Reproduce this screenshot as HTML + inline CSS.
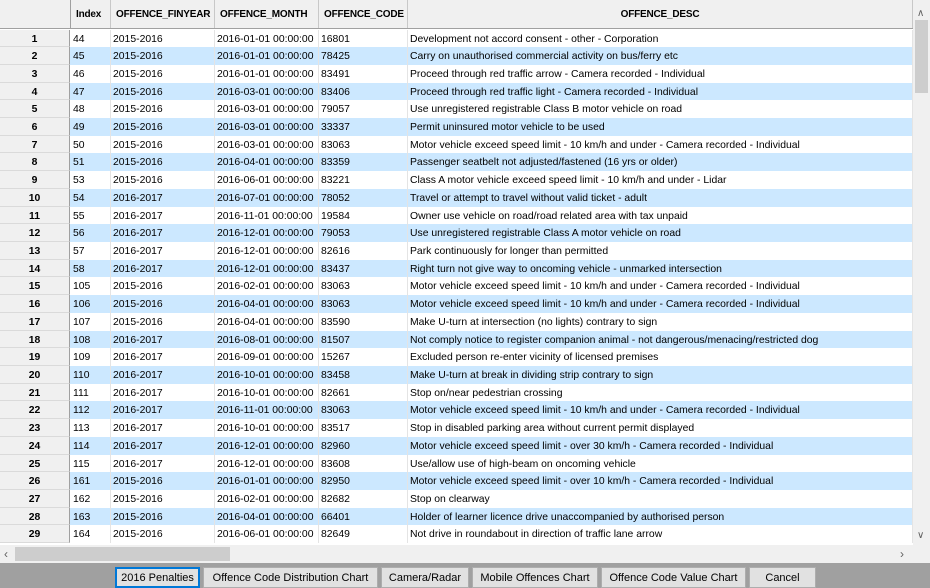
<!DOCTYPE html>
<html><head><meta charset="utf-8"><style>
*{margin:0;padding:0;box-sizing:border-box}
body{width:930px;height:588px;overflow:hidden;background:#fff;font-family:"Liberation Sans",Arial,sans-serif;font-size:10.4px;color:#000;position:relative}
.hdr{position:absolute;top:0;left:0;width:913px;height:29px;background:#f0f0f0;border-bottom:1px solid #a0a0a0}
.h{position:absolute;top:0;height:28px;line-height:30px;font-weight:bold;font-size:10px;letter-spacing:-0.2px;border-right:1px solid #c8c8c8;padding-left:5px;white-space:nowrap}
.row{position:absolute;left:0;width:913px;height:17.71px;line-height:19px;white-space:nowrap}
.row.s{background:#cce8ff}
.c{position:absolute;top:0;height:100%;padding-left:2px;border-right:1px solid #e4e4e4;overflow:hidden}
.rh{position:absolute;left:0;top:0;width:70px;height:100%;background:#f0f0f0;border-right:1px solid #a0a0a0;border-bottom:1px solid #dadada;text-align:center;font-weight:bold;padding-left:0}
.vs{position:absolute;left:913px;top:0;width:17px;height:545px;background:#f0f0f0}
.hs{position:absolute;left:0;top:545px;width:913px;height:18px;background:#f0f0f0}
.bot{position:absolute;left:0;top:563px;width:930px;height:25px;background:#a0a0a0}
.b{position:absolute;top:4px;height:21px;background:#e1e1e1;border:1px solid #adadad;text-align:center;line-height:20px;font-size:11px}
</style></head><body>
<div class="hdr">
<div class="h" style="left:0;width:71px;border-right:1px solid #a0a0a0"></div>
<div class="h" style="left:71px;width:40px">Index</div>
<div class="h" style="left:111px;width:104px">OFFENCE_FINYEAR</div>
<div class="h" style="left:215px;width:104px">OFFENCE_MONTH</div>
<div class="h" style="left:319px;width:89px">OFFENCE_CODE</div>
<div class="h" style="left:408px;width:505px;text-align:center;padding-left:0">OFFENCE_DESC</div>
</div>
<div id="rows"></div>
<div class="vs">
<div style="position:absolute;left:4px;top:8px;font-size:10px;color:#606060">&#x2227;</div>
<div style="position:absolute;left:2px;top:20px;width:13px;height:73px;background:#cdcdcd"></div>
<div style="position:absolute;left:4px;top:530px;font-size:10px;color:#606060">&#x2228;</div>
</div>
<div class="hs">
<div style="position:absolute;left:4px;top:2px;font-size:12px;color:#606060">&lsaquo;</div>
<div style="position:absolute;left:15px;top:2px;width:215px;height:14px;background:#cdcdcd"></div>
<div style="position:absolute;left:900px;top:2px;font-size:12px;color:#606060">&rsaquo;</div>
</div>
<div style="position:absolute;left:913px;top:545px;width:17px;height:18px;background:#f0f0f0"></div>
<div class="bot">
<div class="b" style="left:115px;width:85px;border:2px solid #0078d7;line-height:18px">2016 Penalties</div>
<div class="b" style="left:203px;width:175px">Offence Code Distribution Chart</div>
<div class="b" style="left:381px;width:88px">Camera/Radar</div>
<div class="b" style="left:472px;width:126px">Mobile Offences Chart</div>
<div class="b" style="left:601px;width:145px">Offence Code Value Chart</div>
<div class="b" style="left:749px;width:67px">Cancel</div>
</div>
<script>
var d=[
["44","2015-2016","2016-01-01 00:00:00","16801","Development not accord consent - other - Corporation"],
["45","2015-2016","2016-01-01 00:00:00","78425","Carry on unauthorised commercial activity on bus/ferry etc"],
["46","2015-2016","2016-01-01 00:00:00","83491","Proceed through red traffic arrow - Camera recorded - Individual"],
["47","2015-2016","2016-03-01 00:00:00","83406","Proceed through red traffic light - Camera recorded - Individual"],
["48","2015-2016","2016-03-01 00:00:00","79057","Use unregistered registrable Class B motor vehicle on road"],
["49","2015-2016","2016-03-01 00:00:00","33337","Permit uninsured motor vehicle to be used"],
["50","2015-2016","2016-03-01 00:00:00","83063","Motor vehicle exceed speed limit - 10 km/h and under - Camera recorded - Individual"],
["51","2015-2016","2016-04-01 00:00:00","83359","Passenger seatbelt not adjusted/fastened (16 yrs or older)"],
["53","2015-2016","2016-06-01 00:00:00","83221","Class A motor vehicle exceed speed limit - 10 km/h and under - Lidar"],
["54","2016-2017","2016-07-01 00:00:00","78052","Travel or attempt to travel without valid ticket - adult"],
["55","2016-2017","2016-11-01 00:00:00","19584","Owner use vehicle on road/road related area with tax unpaid"],
["56","2016-2017","2016-12-01 00:00:00","79053","Use unregistered registrable Class A motor vehicle on road"],
["57","2016-2017","2016-12-01 00:00:00","82616","Park continuously for longer than permitted"],
["58","2016-2017","2016-12-01 00:00:00","83437","Right turn not give way to oncoming vehicle - unmarked intersection"],
["105","2015-2016","2016-02-01 00:00:00","83063","Motor vehicle exceed speed limit - 10 km/h and under - Camera recorded - Individual"],
["106","2015-2016","2016-04-01 00:00:00","83063","Motor vehicle exceed speed limit - 10 km/h and under - Camera recorded - Individual"],
["107","2015-2016","2016-04-01 00:00:00","83590","Make U-turn at intersection (no lights) contrary to sign"],
["108","2016-2017","2016-08-01 00:00:00","81507","Not comply notice to register companion animal - not dangerous/menacing/restricted dog"],
["109","2016-2017","2016-09-01 00:00:00","15267","Excluded person re-enter vicinity of licensed premises"],
["110","2016-2017","2016-10-01 00:00:00","83458","Make U-turn at break in dividing strip contrary to sign"],
["111","2016-2017","2016-10-01 00:00:00","82661","Stop on/near pedestrian crossing"],
["112","2016-2017","2016-11-01 00:00:00","83063","Motor vehicle exceed speed limit - 10 km/h and under - Camera recorded - Individual"],
["113","2016-2017","2016-10-01 00:00:00","83517","Stop in disabled parking area without current permit displayed"],
["114","2016-2017","2016-12-01 00:00:00","82960","Motor vehicle exceed speed limit - over 30 km/h - Camera recorded - Individual"],
["115","2016-2017","2016-12-01 00:00:00","83608","Use/allow use of high-beam on oncoming vehicle"],
["161","2015-2016","2016-01-01 00:00:00","82950","Motor vehicle exceed speed limit - over 10 km/h - Camera recorded - Individual"],
["162","2015-2016","2016-02-01 00:00:00","82682","Stop on clearway"],
["163","2015-2016","2016-04-01 00:00:00","66401","Holder of learner licence drive unaccompanied by authorised person"],
["164","2015-2016","2016-06-01 00:00:00","82649","Not drive in roundabout in direction of traffic lane arrow"]];
var L=[[71,40],[111,104],[215,104],[319,89],[408,505]],h="";
for(var i=0;i<d.length;i++){var t=29.5+i*17.71;
h+='<div class="row'+(i%2?' s':'')+'" style="top:'+t+'px"><div class="c rh">'+(i+1)+'</div>';
for(var j=0;j<5;j++)h+='<div class="c" style="left:'+L[j][0]+'px;width:'+L[j][1]+'px">'+d[i][j]+'</div>';
h+='</div>';}
document.getElementById('rows').innerHTML=h;
</script>
</body></html>
